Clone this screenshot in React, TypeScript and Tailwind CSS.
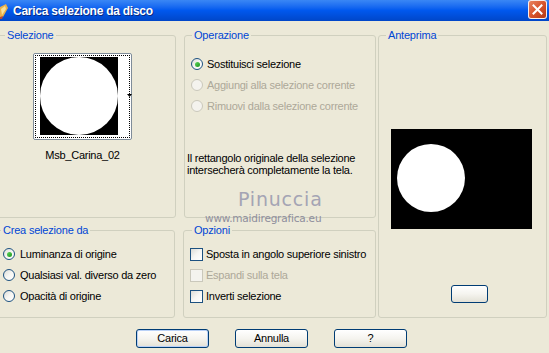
import React from 'react';

const legendCls = "px-[2px] text-[11px] leading-[13px] text-[#0046D5] tracking-[-0.2px]";
const boxCls = "border border-[#D0D0BF] rounded-[3px] min-w-0 p-0 m-0";

const Radio: React.FC<{ checked?: boolean; disabled?: boolean }> = ({ checked, disabled }) => (
  <span
    className={`relative shrink-0 w-[12px] h-[12px] rounded-full border flex items-center justify-center ${
      disabled
        ? 'border-[#CAC8BB] bg-[#F4F3EE]'
        : 'border-[#1C5180] bg-gradient-to-br from-[#DCDCD7] via-[#F6F6F3] to-white'
    }`}
  >
    {checked && (
      <span className="w-[5px] h-[5px] rounded-full bg-gradient-to-br from-[#5FD85F] to-[#169216]" />
    )}
  </span>
);

const Check: React.FC<{ disabled?: boolean }> = ({ disabled }) => (
  <span
    className={`shrink-0 w-[13px] h-[13px] border ${
      disabled
        ? 'border-[#CAC8BB] bg-[#F4F3EE]'
        : 'border-[#1C5180] bg-gradient-to-br from-[#DCDCD7] via-[#F6F6F3] to-white'
    }`}
  />
);

const XpButton: React.FC<{ label: string; focused?: boolean; className?: string }> = ({
  label,
  focused,
  className = '',
}) => (
  <button
    className={`rounded-[3px] border border-[#003C74] bg-gradient-to-b from-white via-[#F5F4EF] to-[#E3E1D6] text-[11px] leading-none text-black ${
      focused ? 'shadow-[inset_0_0_0_1px_#B9D1F7]' : ''
    } ${className}`}
  >
    {label}
  </button>
);

const TitleBar = () => (
  <div className="h-[21px] flex items-center bg-gradient-to-b from-[#3A87F5] via-[#0058EE] to-[#0046C8] relative">
    <svg width="9" height="16" viewBox="0 0 9 16" className="shrink-0">
      <path d="M0 4 L6 1 L8 5 L3 14 L0 15 Z" fill="#E9B04A" />
      <path d="M1 6 L5 3 L6 6 L2 12 Z" fill="#F7E19A" />
      <path d="M0 14 L3 13 L2 16 L0 16 Z" fill="#B5473A" />
    </svg>
    <span className="ml-[4px] text-white font-bold text-[12px] font-['Liberation_Sans',sans-serif] [text-shadow:1px_1px_0_#0A2A80]">
      Carica selezione da disco
    </span>
    <div className="ml-auto mr-[2px] mb-[3px] w-[19px] h-[19px] rounded-[3px] border border-white/90 bg-gradient-to-br from-[#E8835E] via-[#D8542D] to-[#B33A15] flex items-center justify-center">
      <svg width="11" height="11" viewBox="0 0 11 11">
        <path d="M1.5 1.5 L9.5 9.5 M9.5 1.5 L1.5 9.5" stroke="white" strokeWidth="2" strokeLinecap="square" />
      </svg>
    </div>
  </div>
);

export default function App() {
  return (
    <div className="w-[549px] h-[353px] overflow-hidden relative bg-[#ECE9D8] text-[11px] tracking-[-0.25px] text-black font-['Liberation_Sans',Arial,sans-serif]">
      <TitleBar />

      <div className="flex pt-[8px]">
        {/* left two columns */}
        <div className="flex flex-col">
          <div className="flex">
            <fieldset className={`${boxCls} w-[179px] h-[189px] -ml-[3px]`}>
              <legend className={`${legendCls} ml-[7px]`}>Selezione</legend>
              <div className="ml-[35px] mt-[11px] w-[99px] h-[87px] rounded-[2px] border border-[#7F8C99] bg-white relative">
                <div className="absolute inset-[1px] border border-dotted border-black" />
                <div className="absolute left-[6px] top-[3px] w-[78px] h-[78px] bg-black overflow-hidden">
                  <div className="w-[78px] h-[78px] rounded-full bg-white" />
                </div>
                <svg width="5" height="3" viewBox="0 0 5 3" className="absolute left-[93px] top-[40px]">
                  <path d="M0 0 H5 L2.5 3 Z" fill="black" />
                </svg>
              </div>
              <div className="mt-[9px] text-center leading-[13px] pr-[8px]">Msb_Carina_02</div>
            </fieldset>

            <fieldset className={`${boxCls} ml-[8px] w-[192px] h-[189px]`}>
              <legend className={`${legendCls} ml-[7px]`}>Operazione</legend>
              <div className="flex flex-col gap-[9px] mt-[16px] pl-[6px]">
                <label className="flex items-center gap-[4px] leading-[12px]">
                  <Radio checked />
                  <span>Sostituisci selezione</span>
                </label>
                <label className="flex items-center gap-[4px] leading-[12px] text-[#ACA899]">
                  <Radio disabled />
                  <span>Aggiungi alla selezione corrente</span>
                </label>
                <label className="flex items-center gap-[4px] leading-[12px] text-[#ACA899]">
                  <Radio disabled />
                  <span>Rimuovi dalla selezione corrente</span>
                </label>
              </div>
              <p className="mt-[40px] pl-[2px] leading-[12px]">
                Il rettangolo originale della selezione
                <br />
                intersecherà completamente la tela.
              </p>
            </fieldset>
          </div>

          <div className="flex mt-[6px]">
            <fieldset className={`${boxCls} w-[182px] h-[94px] -ml-[7px]`}>
              <legend className={`${legendCls} ml-[7px]`}>Crea selezione da</legend>
              <div className="flex flex-col gap-[9px] mt-[11px] pl-[9px]">
                <label className="flex items-center gap-[5px] leading-[12px]">
                  <Radio checked />
                  <span>Luminanza di origine</span>
                </label>
                <label className="flex items-center gap-[5px] leading-[12px]">
                  <Radio />
                  <span>Qualsiasi val. diverso da zero</span>
                </label>
                <label className="flex items-center gap-[5px] leading-[12px]">
                  <Radio />
                  <span>Opacità di origine</span>
                </label>
              </div>
            </fieldset>

            <fieldset className={`${boxCls} ml-[8px] w-[193px] h-[94px]`}>
              <legend className={`${legendCls} ml-[8px]`}>Opzioni</legend>
              <div className="flex flex-col gap-[8px] mt-[11px] pl-[6px]">
                <label className="flex items-center gap-[3px] leading-[13px]">
                  <Check />
                  <span>Sposta in angolo superiore sinistro</span>
                </label>
                <label className="flex items-center gap-[3px] leading-[13px] text-[#ACA899]">
                  <Check disabled />
                  <span>Espandi sulla tela</span>
                </label>
                <label className="flex items-center gap-[3px] leading-[13px]">
                  <Check />
                  <span>Inverti selezione</span>
                </label>
              </div>
            </fieldset>
          </div>
        </div>

        {/* preview */}
        <fieldset className={`${boxCls} ml-[2px] w-[169px] h-[289px]`}>
          <legend className={`${legendCls} ml-[7px]`}>Anteprima</legend>
          <div className="ml-[12px] mt-[87px] w-[141px] h-[100px] bg-black relative">
            <div className="absolute left-[6px] top-[15px] w-[68px] h-[68px] rounded-full bg-white" />
          </div>
          <XpButton label="" className="ml-[72px] mt-[56px] w-[37px] h-[18px] block" />
        </fieldset>
      </div>

      {/* bottom buttons */}
      <div className="flex pl-[136px] gap-[26px] mt-[11px]">
        <XpButton label="Carica" focused className="w-[73px] h-[19px]" />
        <XpButton label="Annulla" className="w-[73px] h-[19px]" />
        <XpButton label="?" className="w-[73px] h-[19px]" />
      </div>

      {/* watermark */}
      <div className="absolute left-[238px] top-[189px] text-[19px] leading-[20px] tracking-[0.8px] text-[#A4A4B4] font-['DejaVu_Sans',sans-serif] font-normal">
        Pinuccia
      </div>
      <div className="absolute left-[205px] top-[212px] text-[10.5px] leading-[12px] text-[#8E8E9C] font-['DejaVu_Sans',sans-serif] tracking-[-0.2px]">
        www.maidiregrafica.eu
      </div>
    </div>
  );
}
